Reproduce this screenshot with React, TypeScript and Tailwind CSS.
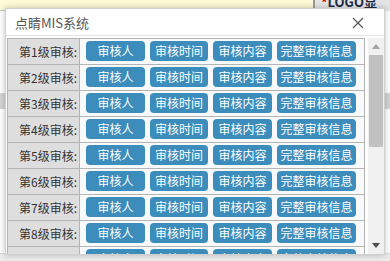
import React from "react";

const LEVELS = ["第1级审核:", "第2级审核:", "第3级审核:", "第4级审核:", "第5级审核:", "第6级审核:", "第7级审核:", "第8级审核:", "第9级审核:"];

const BUTTONS = [
  { label: "审核人", w: "w-[59px]" },
  { label: "审核时间", w: "w-[58px]" },
  { label: "审核内容", w: "w-[59px]" },
  { label: "完整审核信息", w: "w-[79px]" },
];

export default function App() {
  return (
    <div className="relative w-[390px] h-[261px] overflow-hidden bg-white font-['Noto_Sans_CJK_SC',sans-serif]">
      {/* page behind the dialog */}
      <div className="flex h-[11px]">
        <div className="w-[313px] bg-[#fdfbd5] border-b border-[#c8c8c8]" />
        <div className="flex-1 bg-[#e4e4e4] border-l-2 border-[#9a9a9a] pl-[6px] text-[13px] font-bold leading-[11px] text-[#1f2a44] overflow-hidden">
          <span className="relative -top-[4px]">
            <span className="text-[#d40000]">*</span>LOGO显示：
          </span>
        </div>
      </div>
      <div className="h-[82px]" />
      <div className="h-[16px] bg-[#d4d4d4]" />
      <div className="h-[144px]" />
      <div className="h-[8px] bg-[#ececec] border-t border-[#d8d8d8]" />

      {/* dialog */}
      <div className="absolute left-[5px] top-[8px] w-[380px] h-[247px] bg-white border border-[#d0d0d0] shadow-[0_0_6px_rgba(0,0,0,0.25)] flex flex-col">
        <div className="h-[27px] shrink-0 flex items-center justify-between pl-[9px] pr-[20px] border-b border-[#e5e5e5]">
          <span className="text-[13px] leading-none text-[#555]">点睛MIS系统</span>
          <svg width="12" height="12" viewBox="0 0 12 12" className="mt-[1px]">
            <path d="M1 1 L11 11 M11 1 L1 11" stroke="#555" strokeWidth="1.2" fill="none" />
          </svg>
        </div>

        <div className="flex-1 flex overflow-hidden pt-[2px] pl-[1px]">
          <div className="w-[358px] overflow-hidden">
            <table className="border-collapse w-[358px]">
              <tbody>
                {LEVELS.map((lv) => (
                  <tr key={lv} className="h-[26px]">
                    <td className="w-[72px] border border-[#b4b4b4] bg-[#dedede] text-right pr-[2px] text-[12px] leading-none text-[#333] whitespace-nowrap">
                      {lv}
                    </td>
                    <td className="border border-[#b4b4b4] bg-[#f8f9fa] pl-[6px] pt-[2px] pb-[3px]">
                      <div className="flex gap-[5px]">
                        {BUTTONS.map((b) => (
                          <div
                            key={b.label}
                            className={`${b.w} h-[20px] rounded-[4px] bg-[#3c8dbc] text-white text-[12px] leading-[20px] text-center whitespace-nowrap`}
                          >
                            {b.label}
                          </div>
                        ))}
                      </div>
                    </td>
                  </tr>
                ))}
              </tbody>
            </table>
          </div>

          {/* scrollbar */}
          <div className="ml-[3px] w-[16px] bg-[#f1f1f1] flex flex-col items-center">
            <div className="h-[17px] flex items-center justify-center">
              <svg width="8" height="5" viewBox="0 0 8 5">
                <path d="M0 5 L4 0 L8 5 Z" fill="#a3a3a3" />
              </svg>
            </div>
            <div className="w-[14px] h-[92px] bg-[#c1c1c1]" />
            <div className="flex-1" />
            <div className="h-[17px] flex items-center justify-center">
              <svg width="8" height="5" viewBox="0 0 8 5">
                <path d="M0 0 L8 0 L4 5 Z" fill="#505050" />
              </svg>
            </div>
          </div>
        </div>
      </div>
    </div>
  );
}
